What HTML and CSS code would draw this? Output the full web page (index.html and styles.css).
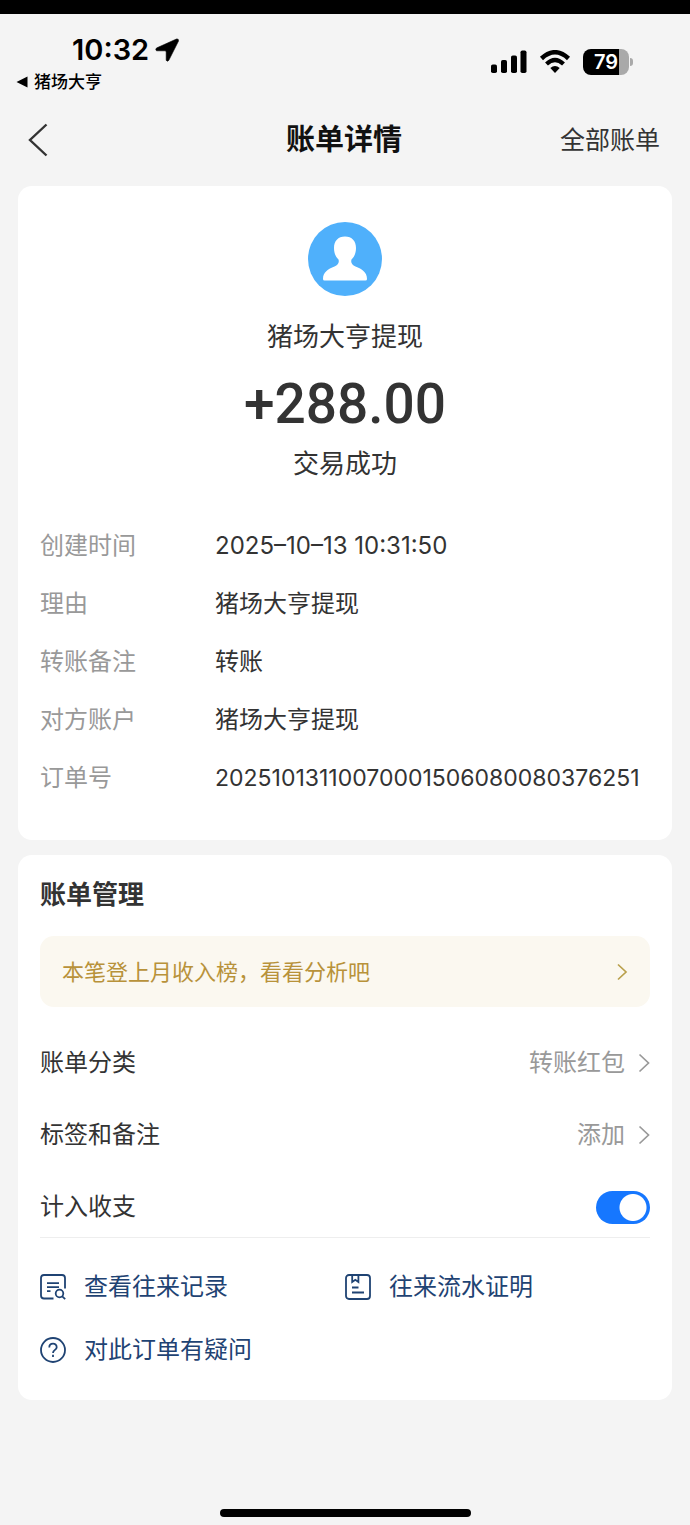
FILE: index.html
```html
<!DOCTYPE html>
<html lang="zh-CN">
<head>
    <meta charset="UTF-8">
    <meta name="viewport" content="width=device-width, initial-scale=1.0">
    <title>账单详情</title>
    <link rel="stylesheet" href="styles.css">
</head>
<body>
    <div class="status-bar">
        <div class="status-left">
            <div class="status-time">
                10:32
                <svg width="24" height="24" viewBox="0 0 24 24"><path d="M21.500 1 L1.500 10 Q0 11.500 1.500 12.800 H10 Q11.200 12.800 11.200 14 V22.300 Q12.500 24 13.800 22.300 L23.500 3 Q23.800 0.400 21.500 1 Z" stroke="#000" stroke-width="0.600"/></svg>
            </div>
            <a class="status-back" href="#">
                <svg width="12" height="12" viewBox="0 0 12 12"><path d="M11.500 0.500 V11.500 L0.500 6 Z"/></svg>
                猪场大亨
            </a>
        </div>
        <div class="status-right">
            <svg width="36" height="24" viewBox="0 0 36 24">
                <rect x="0" y="14.500" width="6" height="8.500" rx="1.800"/>
                <rect x="10" y="10" width="6" height="13" rx="1.800"/>
                <rect x="20" y="5.500" width="6" height="17.500" rx="1.800"/>
                <rect x="29.500" y="0.500" width="6" height="22.500" rx="1.800"/>
            </svg>
            <svg width="32" height="24" viewBox="0 0 32 24">
                <path d="M2.500 8.500 Q16 -4 29.500 8.500" fill="none" stroke="#000" stroke-width="4.500"/>
                <path d="M7.500 14 Q16 6 24.500 14" fill="none" stroke="#000" stroke-width="4.200"/>
                <path d="M11.300 18 Q16 13.800 20.700 18 L16 23 Z"/>
            </svg>
            <div class="battery"><span class="battery-level">79</span></div>
        </div>
    </div>

    <header class="header">
        <button class="back-btn" aria-label="返回">
            <svg width="20" height="34" viewBox="0 0 20 34"><path d="M18.500 1.500 L2 17 L18.500 32.500" fill="none" stroke="#333" stroke-width="2.400"/></svg>
        </button>
        <h1 class="header-title">账单详情</h1>
        <a class="header-link" href="#">全部账单</a>
    </header>

    <main class="content">
        <section class="block summary">
            <svg class="avatar" width="74" height="74" viewBox="0 0 74 74">
                <circle cx="37" cy="37" r="37" fill="#4fb0fb"/>
                <path d="M37 14.500 C30 14.500 26 19 26 26 C26 31 27.500 34.500 30.500 37.500 C31.500 40.500 30 43 26.500 44.500 C20 47.200 15 50 15 57 Q15 58.500 16.500 58.500 H57.500 Q59 58.500 59 57 C59 50 54 47.200 47.500 44.500 C44 43 42.500 40.500 43.500 37.500 C46.500 34.500 48 31 48 26 C48 19 44 14.500 37 14.500 Z" fill="#fff"/>
            </svg>
            <div class="payee">猪场大亨提现</div>
            <div class="amount">+288.00</div>
            <div class="state">交易成功</div>
            <dl class="detail">
                <dt>创建时间</dt>
                <dd>2025–10–13 10:31:50</dd>
                <dt>理由</dt>
                <dd>猪场大亨提现</dd>
                <dt>转账备注</dt>
                <dd>转账</dd>
                <dt>对方账户</dt>
                <dd>猪场大亨提现</dd>
                <dt>订单号</dt>
                <dd class="order-no">20251013110070001506080080376251</dd>
            </dl>
        </section>

        <section class="block manage">
            <h2 class="section-title">账单管理</h2>
            <a class="notice" href="#">
                本笔登上月收入榜，看看分析吧
                <svg width="12" height="18" viewBox="0 0 12 18"><path d="M2 1.500 L10 9 L2 16.500" fill="none" stroke="#b9a04c" stroke-width="1.700"/></svg>
            </a>
            <div class="options">
                <a class="option" href="#">
                    <span>账单分类</span>
                    <span class="option-value">转账红包
                        <svg width="12" height="20" viewBox="0 0 12 20"><path d="M1.500 1.500 L10.500 10 L1.500 18.500" fill="none" stroke="#999" stroke-width="1.700"/></svg>
                    </span>
                </a>
                <a class="option" href="#">
                    <span>标签和备注</span>
                    <span class="option-value">添加
                        <svg width="12" height="20" viewBox="0 0 12 20"><path d="M1.500 1.500 L10.500 10 L1.500 18.500" fill="none" stroke="#999" stroke-width="1.700"/></svg>
                    </span>
                </a>
                <div class="option">
                    <label for="countIn">计入收支</label>
                    <input type="checkbox" id="countIn" class="switch" checked>
                </div>
            </div>
            <div class="links">
                <a href="#">
                    <svg width="26" height="26" viewBox="0 0 26 26" fill="none" stroke="#1f4373" stroke-width="1.800">
                        <path d="M13.500 24.500 H4 Q1 24.500 1 21.500 V4 Q1 1 4 1 H22 Q25 1 25 4 V14.500"/>
                        <path d="M7 9.200 H19 M7 13.200 H19 M7 17.200 H10.500"/>
                        <circle cx="19.500" cy="19.500" r="3.800"/>
                        <path d="M22 22.200 L25.200 25.200"/>
                    </svg>
                    查看往来记录
                </a>
                <a href="#">
                    <svg width="26" height="26" viewBox="0 0 26 26" fill="none" stroke="#1f4373" stroke-width="1.800">
                        <rect x="1" y="1" width="24" height="24" rx="3"/>
                        <path d="M7.200 1 V8 L10.300 5.800 L13.400 8 V1"/>
                        <path d="M7 13.500 H13.500 M7 18.500 H19"/>
                    </svg>
                    往来流水证明
                </a>
                <a href="#">
                    <svg width="26" height="26" viewBox="0 0 26 26" fill="none" stroke="#1f4373" stroke-width="1.800">
                        <circle cx="13" cy="13" r="12"/>
                        <path d="M9.300 10.400 C9.300 5.500 16.700 5.500 16.700 10.200 C16.700 13 13 12.800 13 16"/>
                        <path d="M13 17.800 V20"/>
                    </svg>
                    对此订单有疑问
                </a>
            </div>
        </section>
    </main>

    <div class="home-bar"></div>
</body>
</html>
```
FILE: styles.css
```css
* {
    box-sizing: border-box;
}
body {
    display: flex;
    flex-direction: column;
    min-height: 100vh;
    margin: 0;
    border-top: 14px solid #000;
    background-color: #f4f4f4;
    color: #333;
    font-family: Inter, "Noto Sans CJK SC", sans-serif;
    font-size: 24px;
    line-height: 36px;
}
a {
    color: inherit;
    text-decoration: none;
}
svg {
    flex: none;
}
h1, h2, dl, dd {
    margin: 0;
}

/* 状态栏 */
.status-bar {
    display: flex;
    justify-content: space-between;
    padding: 20px 61px 0 16px;
    color: #000;
}
.status-time {
    display: flex;
    align-items: center;
    gap: 6px;
    padding-left: 56px;
    font-size: 29px;
    font-weight: 600;
    line-height: 32px;
}
.status-back {
    display: flex;
    align-items: center;
    gap: 6px;
    font-size: 17px;
    font-weight: 500;
    line-height: 32px;
}
.status-right {
    display: flex;
    align-items: center;
    gap: 12px;
    height: 56px;
}
.battery {
    position: relative;
    width: 46px;
    height: 26px;
    border-radius: 8px;
    background: linear-gradient(to right, #000 79%, #a9a9a9 79%);
    color: #fff;
    font-size: 20px;
    font-weight: 600;
    line-height: 26px;
    text-align: center;
}
.battery::after {
    content: "";
    position: absolute;
    top: 9px;
    right: -4px;
    width: 3px;
    height: 8px;
    border-radius: 0 4px 4px 0;
    background-color: #a9a9a9;
}

/* 导航 */
.header {
    display: grid;
    grid-template-columns: 1fr auto 1fr;
    align-items: center;
    height: 84px;
    padding: 0 30px 0 28px;
}
.back-btn {
    display: flex;
    justify-self: start;
    padding: 0;
    border: none;
    background: none;
    cursor: pointer;
}
.header-title {
    color: #111;
    font-size: 29px;
    font-weight: 600;
}
.header-link {
    justify-self: end;
    font-size: 25px;
}

.content {
    display: flex;
    flex-direction: column;
    flex: 1;
    gap: 15px;
    padding: 4px 18px 24px;
}
.block {
    padding: 22px;
    border-radius: 14px;
    background-color: #fff;
}

/* 账单信息 */
.summary {
    display: flex;
    flex-direction: column;
    align-items: center;
    padding-top: 36px;
    padding-bottom: 33px;
}
.payee {
    margin-top: 23px;
    font-size: 26px;
}
.amount {
    margin: 19px 0 12px;
    font-family: Roboto, sans-serif;
    font-size: 55px;
    font-weight: 500;
    line-height: 60px;
}
.state {
    font-size: 26px;
}
.detail {
    display: grid;
    grid-template-columns: 175px 1fr;
    align-self: stretch;
    margin-top: 35px;
    line-height: 58px;
}
.detail dt {
    color: #999;
}
.detail .order-no {
    font-size: 23px;
}

/* 账单管理 */
.manage {
    padding-bottom: 32px;
}
.section-title {
    font-size: 26px;
    font-weight: 600;
}
.notice {
    display: flex;
    align-items: center;
    justify-content: space-between;
    height: 71px;
    margin: 23px 0 26px;
    padding: 0 22px;
    border-radius: 14px;
    background-color: #fbf8f0;
    color: #b8923a;
    font-size: 22px;
}
.options {
    display: flex;
    flex-direction: column;
    gap: 12px;
    border-bottom: 1px solid #eee;
}
.option {
    display: flex;
    align-items: center;
    justify-content: space-between;
    height: 60px;
}
.option-value {
    display: flex;
    align-items: center;
    gap: 13px;
    color: #999;
}
.switch {
    appearance: none;
    width: 54px;
    height: 33px;
    margin: 0;
    border-radius: 17px;
    background: #ddd radial-gradient(circle at 17px 50%, #fff 13px, transparent 14px);
    cursor: pointer;
}
.switch:checked {
    background: #1677ff radial-gradient(circle at 37px 50%, #fff 13px, transparent 14px);
}
.links {
    display: grid;
    grid-template-columns: 1fr 1fr;
    gap: 27px 0;
    margin-top: 31px;
    color: #1f4373;
}
.links a {
    display: flex;
    align-items: center;
    gap: 18px;
}

.home-bar {
    width: 251px;
    height: 8px;
    margin: 0 auto 8px;
    border-radius: 4px;
    background-color: #000;
}
```
